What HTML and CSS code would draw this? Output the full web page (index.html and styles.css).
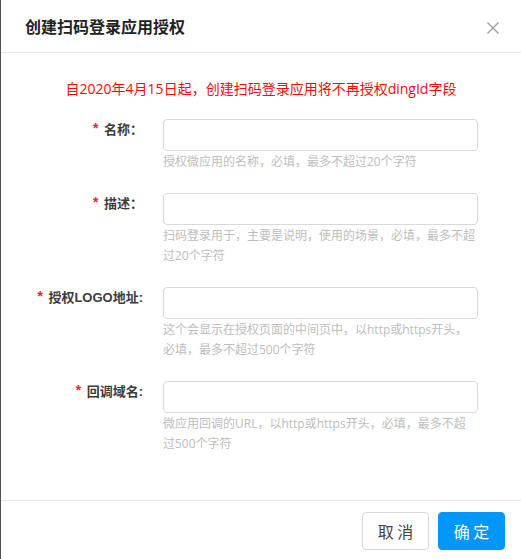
FILE: index.html
```html
<!DOCTYPE html>
<html lang="zh-CN">
<head>
<meta charset="utf-8">
<title>创建扫码登录应用授权</title>
<link rel="stylesheet" href="styles.css">
</head>
<body>
<div class="modal">
  <div class="modal-header">
    <div class="modal-title">创建扫码登录应用授权</div>
    <button class="modal-close" aria-label="关闭">
      <svg width="12" height="12" viewBox="0 0 12 12"><path d="M0.5 0.5L11.5 11.5M11.5 0.5L0.5 11.5" stroke="#9a9a9a" stroke-width="1.3" fill="none"/></svg>
    </button>
  </div>
  <div class="modal-body">
    <div class="notice">自2020年4月15日起，创建扫码登录应用将不再授权dingId字段</div>
    <div class="form">
      <div class="form-row">
        <label class="form-label"><span class="req">*</span>名称：</label>
        <div class="form-control">
          <input class="input" type="text">
          <div class="help">授权微应用的名称，必填，最多不超过20个字符</div>
        </div>
      </div>
      <div class="form-row">
        <label class="form-label"><span class="req">*</span>描述：</label>
        <div class="form-control">
          <input class="input" type="text">
          <div class="help">扫码登录用于，主要是说明，使用的场景，必填，最多不超过20个字符</div>
        </div>
      </div>
      <div class="form-row">
        <label class="form-label"><span class="req">*</span>授权LOGO地址:</label>
        <div class="form-control">
          <input class="input" type="text">
          <div class="help">这个会显示在授权页面的中间页中，以http或https开头，必填，最多不超过500个字符</div>
        </div>
      </div>
      <div class="form-row">
        <label class="form-label"><span class="req">*</span>回调域名:</label>
        <div class="form-control">
          <input class="input" type="text">
          <div class="help">微应用回调的URL，以http或https开头，必填，最多不超过500个字符</div>
        </div>
      </div>
    </div>
  </div>
  <div class="modal-footer">
    <button class="btn">取 消</button>
    <button class="btn btn-primary">确 定</button>
  </div>
</div>
</body>
</html>
```
FILE: styles.css
```css
html, body {
  margin: 0;
  padding: 0;
  background: #fff;
}
body {
  font-family: "Liberation Sans", "Noto Sans CJK SC", sans-serif;
  color: #333;
}
.modal {
  width: 521px;
  height: 559px;
  box-sizing: border-box;
  border-left: 1px solid #4f4f4f;
  display: flex;
  flex-direction: column;
  background: #fff;
}
.modal-header {
  display: flex;
  align-items: center;
  justify-content: space-between;
  height: 53px;
  box-sizing: border-box;
  padding: 3px 22px 0 24px;
  border-bottom: 1px solid #e6e6e6;
}
.modal-title {
  font-size: 16px;
  font-weight: 600;
  line-height: 22px;
  color: #222;
}
.modal-close {
  border: 0;
  background: none;
  padding: 0;
  width: 12px;
  height: 12px;
  display: flex;
  cursor: pointer;
}
.modal-body {
  flex: 1;
  padding-top: 25px;
}
.notice {
  font-family: "Open Sans", "Noto Sans CJK SC", sans-serif;
  font-size: 14px;
  line-height: 22px;
  color: #f20d0d;
  text-align: center;
  margin-bottom: 19px;
}
.form {
  display: flex;
  flex-direction: column;
  gap: 21px;
}
.form-row {
  display: grid;
  grid-template-columns: 142px 315px;
  column-gap: 20px;
}
.form-label {
  text-align: right;
  font-size: 13px;
  font-weight: 700;
  line-height: 20px;
  color: #3c3c3c;
  padding-top: 1px;
}
.req {
  color: #f5222d;
  font-family: "Liberation Mono", monospace;
  font-weight: 700;
  font-size: 14px;
  margin-right: 4px;
}
.input {
  display: block;
  width: 315px;
  height: 32px;
  box-sizing: border-box;
  border: 1px solid #d9d9d9;
  border-radius: 4px;
  padding: 4px 11px;
  font-size: 14px;
  outline: none;
}
.help {
  max-width: 313px;
  margin-top: 1px;
  font-family: "Open Sans", "Noto Sans CJK SC", sans-serif;
  font-size: 12px;
  line-height: 20px;
  color: #bdbdbd;
}
.modal-footer {
  display: flex;
  justify-content: flex-end;
  gap: 9px;
  height: 59px;
  box-sizing: border-box;
  padding: 11px 16px 10px 0;
  border-top: 1px solid #e6e6e6;
}
.btn {
  width: 67px;
  height: 38px;
  border: 1px solid #d9d9d9;
  border-radius: 4px;
  background: #fff;
  color: #444;
  font-family: "Noto Sans CJK SC", sans-serif;
  font-size: 16px;
  padding: 0;
  cursor: pointer;
}
.btn-primary {
  background: #0096fa;
  border-color: #0096fa;
  color: #fff;
}
```
